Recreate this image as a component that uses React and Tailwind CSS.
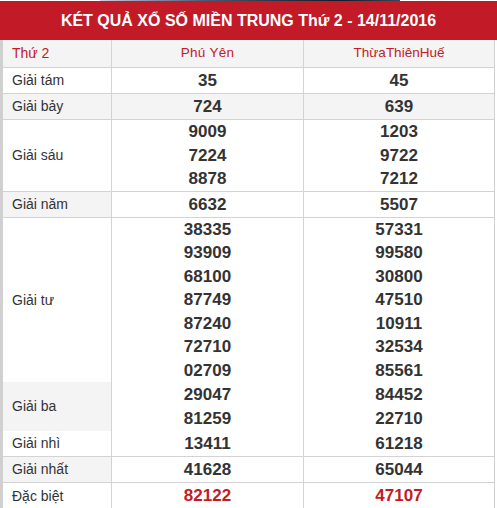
const rows = [
  { label: 'Giải tám', a: ['35'], b: ['45'], h: 'h-[25px]', gray: false },
  { label: 'Giải bảy', a: ['724'], b: ['639'], h: 'h-[25px]', gray: true, full: true },
  { label: 'Giải sáu', a: ['9009', '7224', '8878'], b: ['1203', '9722', '7212'], h: 'h-[71px]', gray: false },
  { label: 'Giải năm', a: ['6632'], b: ['5507'], h: 'h-[25px]', gray: true },
  {
    label: 'Giải tư',
    a: ['38335', '93909', '68100', '87749', '87240', '72710', '02709'],
    b: ['57331', '99580', '30800', '47510', '10911', '32534', '85561'],
    h: 'h-[164px]',
    gray: false,
    noBorder: true,
  },
  { label: 'Giải ba', a: ['29047', '81259'], b: ['84452', '22710'], h: 'h-[49px]', gray: true, noBorder: true, lead: 'leading-[24px]' },
  { label: 'Giải nhì', a: ['13411'], b: ['61218'], h: 'h-[25px]', gray: false },
  { label: 'Giải nhất', a: ['41628'], b: ['65044'], h: 'h-[25px]', gray: true },
  { label: 'Đặc biệt', a: ['82122'], b: ['47107'], h: 'h-[26px]', gray: false, red: true },
];

const Numbers = ({ list, red, lead }) => (
  <div className={`flex flex-col items-center justify-center h-full font-bold text-[17px] ${lead || 'leading-[23.4px]'} ${red ? 'text-[#c41a26]' : 'text-[#333]'}`}>
    {list.map((n, i) => (
      <span key={i}>{n}</span>
    ))}
  </div>
);

export default function App() {
  return (
    <div className="w-[497px] h-[508px] overflow-hidden bg-white font-['Liberation_Sans',Arial,sans-serif]">
      {/* strip of the banner image above */}
      <div className="h-px flex">
        <div className="w-[100px]" />
        <div className="w-[300px] bg-[linear-gradient(90deg,#d4cde0,#9aa0bb_12%,#4a5a72_35%,#2a3344_60%,#151b28_80%,#3c4558)]" />
      </div>
      <div className="h-[39px] bg-[#c21a26] flex items-center justify-center text-white font-bold text-[16px]">
        KÉT QUẢ XỔ SỐ MIỀN TRUNG Thứ 2 - 14/11/2016
      </div>

      <div className="w-[495px] border-l-[3px] border-r border-[#d0d0d0]">
        {/* header */}
        <div className="flex h-[28px] border-b border-[#d3d3d3] bg-[#f4f4f4] text-[#c21a26] text-[13.5px]">
          <div className="w-[109px] border-r border-[#d3d3d3] flex items-center pl-[9px] text-[14px]">Thứ 2</div>
          <div className="w-[192px] border-r border-[#d3d3d3] flex items-center justify-center tracking-[0.3px]">Phú Yên</div>
          <div className="flex-1 flex items-center justify-center">ThừaThiênHuế</div>
        </div>

        {rows.map((r, i) => (
          <div key={i} className={`flex ${r.noBorder ? '' : 'border-b border-[#d3d3d3]'}`}>
            <div className={`w-[109px] ${r.h} border-r border-[#d3d3d3] flex items-center pl-[9px] text-[14px] text-[#333] ${r.gray ? 'bg-[#f4f4f4]' : ''}`}>
              {r.label}
            </div>
            <div className={`w-[192px] ${r.h} border-r border-[#d3d3d3] ${r.full ? 'bg-[#f4f4f4]' : ''}`}>
              <Numbers list={r.a} red={r.red} lead={r.lead} />
            </div>
            <div className={`flex-1 ${r.h} ${r.full ? 'bg-[#f4f4f4]' : ''}`}>
              <Numbers list={r.b} red={r.red} lead={r.lead} />
            </div>
          </div>
        ))}
      </div>
    </div>
  );
}
